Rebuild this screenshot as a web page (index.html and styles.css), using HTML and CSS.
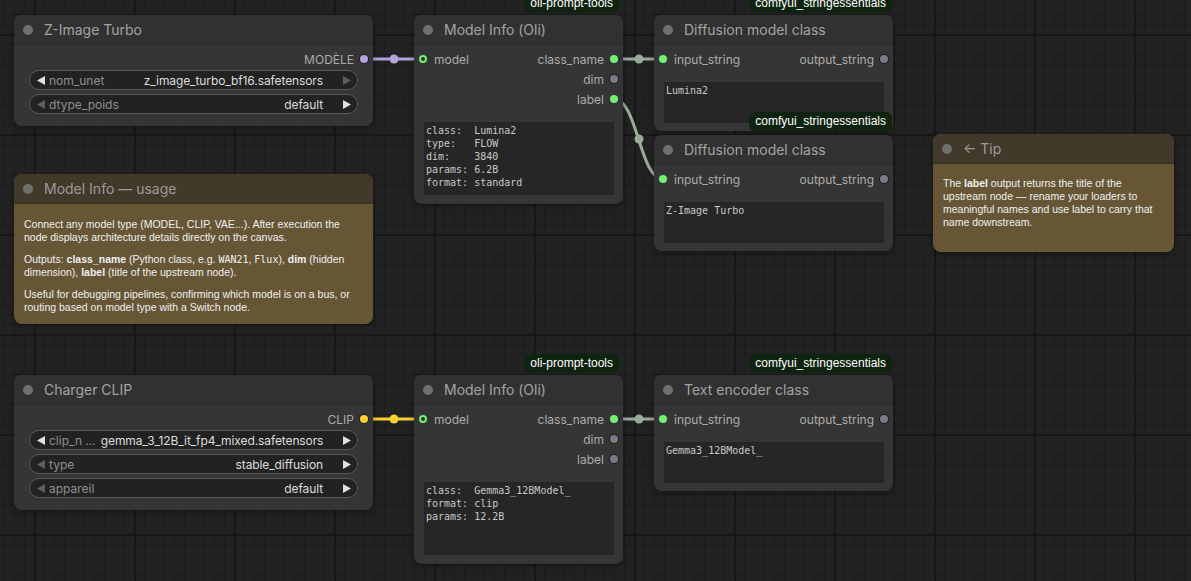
FILE: index.html
```html
<!DOCTYPE html>
<html>

<head>
    <title>ComfyUI - Model Info</title>
    <meta content="width=device-width, initial-scale=1" name="viewport" />
    <meta http-equiv="Content-Type" content="text/html; charset=utf-8" />
    <link rel="stylesheet" href="styles.css">
</head>

<body>
    <div class="canvas">
        <!-- links are drawn under the nodes -->
        <svg class="links" width="1191" height="581" viewBox="0 0 1191 581">
            <g fill="none" stroke-width="3">
                <path d="M364 59 L423 59" stroke="#b3a3dc" />
                <path d="M614 59 L663 59" stroke="#9aab98" />
                <path d="M614 99 C637.5 99, 639.5 179, 663 179" stroke="#9aab98" />
                <path d="M364 419 L423 419" stroke="#f7cf2f" />
                <path d="M614 419 L663 419" stroke="#9aab98" />
            </g>
            <circle cx="394" cy="59" r="4.5" fill="#b3a3dc" />
            <circle cx="639" cy="59" r="4.5" fill="#9aab98" />
            <circle cx="639" cy="139" r="4.5" fill="#9aab98" />
            <circle cx="394" cy="419" r="4.5" fill="#f7cf2f" />
            <circle cx="639" cy="419" r="4.5" fill="#9aab98" />
        </svg>

        <!-- top row -->
        <div class="node n-zimage">
            <div class="node-title"><span class="title-dot"></span>Z-Image Turbo</div>
            <div class="node-body">
                <div class="slot-row">
                    <span></span>
                    <span class="slot out">MODÈLE<i class="dot dot-model"></i></span>
                </div>
                <div class="widgets">
                    <div class="widget">
                        <svg class="arrow on" width="8" height="9" viewBox="0 0 8 9"><path d="M8 0 L8 9 L0 4.5 Z" /></svg>
                        <span class="w-label">nom_unet</span>
                        <span class="w-value">z_image_turbo_bf16.safetensors</span>
                        <svg class="arrow" width="8" height="9" viewBox="0 0 8 9"><path d="M0 0 L0 9 L8 4.5 Z" /></svg>
                    </div>
                    <div class="widget">
                        <svg class="arrow" width="8" height="9" viewBox="0 0 8 9"><path d="M8 0 L8 9 L0 4.5 Z" /></svg>
                        <span class="w-label">dtype_poids</span>
                        <span class="w-value">default</span>
                        <svg class="arrow on" width="8" height="9" viewBox="0 0 8 9"><path d="M0 0 L0 9 L8 4.5 Z" /></svg>
                    </div>
                </div>
            </div>
        </div>

        <div class="node n-info-top">
            <div class="badge">oli-prompt-tools</div>
            <div class="node-title"><span class="title-dot"></span>Model Info (Oli)</div>
            <div class="node-body">
                <div class="slot-row">
                    <span class="slot in"><i class="dot dot-ring"></i>model</span>
                    <span class="slot out">class_name<i class="dot dot-green"></i></span>
                </div>
                <div class="slot-row">
                    <span></span>
                    <span class="slot out">dim<i class="dot dot-gray"></i></span>
                </div>
                <div class="slot-row">
                    <span></span>
                    <span class="slot out">label<i class="dot dot-green"></i></span>
                </div>
                <pre class="textbox info-box">class:  Lumina2
type:   FLOW
dim:    3840
params: 6.2B
format: standard</pre>
            </div>
        </div>

        <div class="node n-diff-a">
            <div class="badge">comfyui_stringessentials</div>
            <div class="node-title"><span class="title-dot"></span>Diffusion model class</div>
            <div class="node-body">
                <div class="slot-row">
                    <span class="slot in"><i class="dot dot-green"></i>input_string</span>
                    <span class="slot out">output_string<i class="dot dot-gray"></i></span>
                </div>
                <pre class="textbox string-box">Lumina2</pre>
            </div>
        </div>

        <div class="node n-diff-b">
            <div class="badge">comfyui_stringessentials</div>
            <div class="node-title"><span class="title-dot"></span>Diffusion model class</div>
            <div class="node-body">
                <div class="slot-row">
                    <span class="slot in"><i class="dot dot-green"></i>input_string</span>
                    <span class="slot out">output_string<i class="dot dot-gray"></i></span>
                </div>
                <pre class="textbox string-box">Z-Image Turbo</pre>
            </div>
        </div>

        <div class="node note n-tip">
            <div class="node-title"><span class="title-dot"></span>← Tip</div>
            <div class="note-body">
                <p>The <b>label</b> output returns the title of the<br>upstream node — rename your loaders to<br>meaningful names and use label to carry that<br>name downstream.</p>
            </div>
        </div>

        <div class="node note n-usage">
            <div class="node-title"><span class="title-dot"></span>Model Info — usage</div>
            <div class="note-body">
                <p>Connect any model type (MODEL, CLIP, VAE...). After execution the<br>node displays architecture details directly on the canvas.</p>
                <p>Outputs: <b>class_name</b> (Python class, e.g. <code>WAN21</code>, <code>Flux</code>), <b>dim</b> (hidden<br>dimension), <b>label</b> (title of the upstream node).</p>
                <p>Useful for debugging pipelines, confirming which model is on a bus, or<br>routing based on model type with a Switch node.</p>
            </div>
        </div>

        <!-- bottom row -->
        <div class="node n-clip">
            <div class="node-title"><span class="title-dot"></span>Charger CLIP</div>
            <div class="node-body">
                <div class="slot-row">
                    <span></span>
                    <span class="slot out">CLIP<i class="dot dot-clip"></i></span>
                </div>
                <div class="widgets">
                    <div class="widget">
                        <svg class="arrow on" width="8" height="9" viewBox="0 0 8 9"><path d="M8 0 L8 9 L0 4.5 Z" /></svg>
                        <span class="w-label">clip_n …</span>
                        <span class="w-value">gemma_3_12B_it_fp4_mixed.safetensors</span>
                        <svg class="arrow on" width="8" height="9" viewBox="0 0 8 9"><path d="M0 0 L0 9 L8 4.5 Z" /></svg>
                    </div>
                    <div class="widget">
                        <svg class="arrow" width="8" height="9" viewBox="0 0 8 9"><path d="M8 0 L8 9 L0 4.5 Z" /></svg>
                        <span class="w-label">type</span>
                        <span class="w-value">stable_diffusion</span>
                        <svg class="arrow on" width="8" height="9" viewBox="0 0 8 9"><path d="M0 0 L0 9 L8 4.5 Z" /></svg>
                    </div>
                    <div class="widget">
                        <svg class="arrow" width="8" height="9" viewBox="0 0 8 9"><path d="M8 0 L8 9 L0 4.5 Z" /></svg>
                        <span class="w-label">appareil</span>
                        <span class="w-value">default</span>
                        <svg class="arrow on" width="8" height="9" viewBox="0 0 8 9"><path d="M0 0 L0 9 L8 4.5 Z" /></svg>
                    </div>
                </div>
            </div>
        </div>

        <div class="node n-info-bottom">
            <div class="badge">oli-prompt-tools</div>
            <div class="node-title"><span class="title-dot"></span>Model Info (Oli)</div>
            <div class="node-body">
                <div class="slot-row">
                    <span class="slot in"><i class="dot dot-ring"></i>model</span>
                    <span class="slot out">class_name<i class="dot dot-green"></i></span>
                </div>
                <div class="slot-row">
                    <span></span>
                    <span class="slot out">dim<i class="dot dot-gray"></i></span>
                </div>
                <div class="slot-row">
                    <span></span>
                    <span class="slot out">label<i class="dot dot-gray"></i></span>
                </div>
                <pre class="textbox info-box">class:  Gemma3_12BModel_
format: clip
params: 12.2B</pre>
            </div>
        </div>

        <div class="node n-encoder">
            <div class="badge">comfyui_stringessentials</div>
            <div class="node-title"><span class="title-dot"></span>Text encoder class</div>
            <div class="node-body">
                <div class="slot-row">
                    <span class="slot in"><i class="dot dot-green"></i>input_string</span>
                    <span class="slot out">output_string<i class="dot dot-gray"></i></span>
                </div>
                <pre class="textbox string-box">Gemma3_12BModel_</pre>
            </div>
        </div>
    </div>
</body>

</html>
```

FILE: styles.css
```css
* {
    margin: 0;
    padding: 0;
    box-sizing: border-box;
}

html,
body {
    font-family: Inter, 'Noto Sans', sans-serif;
    height: 100%;
    width: 100%;
    overflow: hidden;
    background: #212121;
}

.canvas {
    background-color: #222222;
    background-image:
        linear-gradient(to right, #171717 2px, transparent 2px),
        linear-gradient(to bottom, #171717 2px, transparent 2px),
        linear-gradient(to right, #1c1c1c 1px, transparent 1px),
        linear-gradient(to bottom, #1c1c1c 1px, transparent 1px);
    background-position: 34px 34px, 34px 34px, 4px 4px, 4px 4px;
    background-size: 100px 100px, 100px 100px, 10px 10px, 10px 10px;
    height: 581px;
    overflow: hidden;
    position: relative;
    width: 1191px;
}

.links {
    left: 0;
    position: absolute;
    top: 0;
}

/* nodes sit on the free canvas */
.node {
    background: #353535;
    border-radius: 8px;
    box-shadow: 0 2px 6px rgba(0, 0, 0, 0.35);
    position: absolute;
}

.n-zimage { left: 14px; top: 15px; width: 359px; }
.n-info-top { left: 414px; top: 15px; width: 209px; }
.n-diff-a { left: 654px; top: 15px; width: 239px; }
.n-diff-b { left: 654px; top: 135px; width: 239px; }
.n-tip { left: 933px; top: 134px; width: 241px; height: 118px; }
.n-usage { left: 14px; top: 174px; width: 359px; height: 150px; }
.n-clip { left: 14px; top: 375px; width: 359px; }
.n-info-bottom { left: 414px; top: 375px; width: 209px; }
.n-encoder { left: 654px; top: 375px; width: 239px; }

.node-title {
    align-items: center;
    background: #313131;
    border-bottom: 1px solid #2b2b2b;
    border-radius: 8px 8px 0 0;
    color: #a3a3a3;
    display: flex;
    font-size: 14px;
    height: 30px;
    padding-left: 9px;
}

.title-dot {
    background: #6f6f6f;
    border-radius: 50%;
    height: 10px;
    margin-right: 11px;
    width: 10px;
}

.node-body {
    display: flex;
    flex-direction: column;
    padding: 4px 0 8px 0;
}

.n-info-top .node-body,
.n-info-bottom .node-body {
    padding-bottom: 9px;
}

.slot-row {
    align-items: center;
    color: #ababab;
    display: flex;
    font-size: 12px;
    height: 20px;
    justify-content: space-between;
    padding: 0 5px;
}

.slot {
    align-items: center;
    display: flex;
}

.slot.in .dot {
    margin-right: 7px;
}

.slot.out .dot {
    margin-left: 6px;
}

.dot {
    border-radius: 50%;
    display: block;
    height: 8px;
    width: 8px;
}

.dot-model { background: #b3a3dc; box-shadow: 0 0 0 1px #1e1e1e; }
.dot-clip { background: #f7cf2f; box-shadow: 0 0 0 1px #1e1e1e; }
.dot-green { background: #77ee77; }
.dot-gray { background: #7a7a88; box-shadow: 0 0 0 1px #1e1e1e; }
.dot-ring { background: #1f3a1f; border: 2px solid #77ee77; }

.widgets {
    display: flex;
    flex-direction: column;
    gap: 4px;
    margin: 1px 15px 4px 15px;
}

.widget {
    align-items: center;
    background: #222222;
    border: 1px solid #5a5a5a;
    border-radius: 10px;
    display: flex;
    font-size: 12px;
    height: 20px;
    padding: 0 6px 0 7px;
    white-space: nowrap;
}

.arrow {
    fill: #5e5e5e;
    flex: none;
}

.arrow.on {
    fill: #e0e0e0;
}

.w-label {
    color: #8f8f8f;
    margin-left: 4px;
    margin-right: 5px;
}

.w-value {
    color: #dddddd;
    letter-spacing: -0.1px;
    margin-left: auto;
    margin-right: 20px;
}

.textbox {
    background: #262626;
    color: #c8c8c8;
    font-family: 'DejaVu Sans Mono', 'Liberation Mono', monospace;
    font-size: 10px;
    line-height: 13px;
    margin: 13px 9px 0 10px;
    padding: 2px 2px;
}

.info-box {
    height: 73px;
}

.string-box {
    height: 41px;
    padding-top: 2px;
}

.badge {
    background: #0f2311;
    border-radius: 6px;
    bottom: calc(100% + 2px);
    color: #ffffff;
    font-family: 'Liberation Sans', Arial, sans-serif;
    font-size: 12px;
    height: 19px;
    line-height: 19px;
    padding: 0 6px;
    position: absolute;
    right: 4px;
}

.n-diff-a .badge,
.n-diff-b .badge,
.n-encoder .badge {
    right: 1px;
}

.n-diff-b .badge {
    bottom: calc(100% + 4px);
}

/* note nodes */
.note {
    background: #665636;
}

.note .node-title {
    background: #43392a;
    border-bottom-color: #3a3123;
    color: #9b9b9b;
}

.note-body {
    color: #f0f0f0;
    font-family: 'Liberation Sans', Arial, sans-serif;
    font-size: 10.5px;
    line-height: 13px;
    padding: 13px 10px 10px 10px;
    white-space: nowrap;
}

.n-usage .note-body {
    padding-top: 14px;
}

.note-body p + p {
    margin-top: 9px;
}

.note-body b {
    font-weight: 700;
}

.note-body code {
    font-family: 'DejaVu Sans Mono', 'Liberation Mono', monospace;
    font-size: 10px;
}
```
